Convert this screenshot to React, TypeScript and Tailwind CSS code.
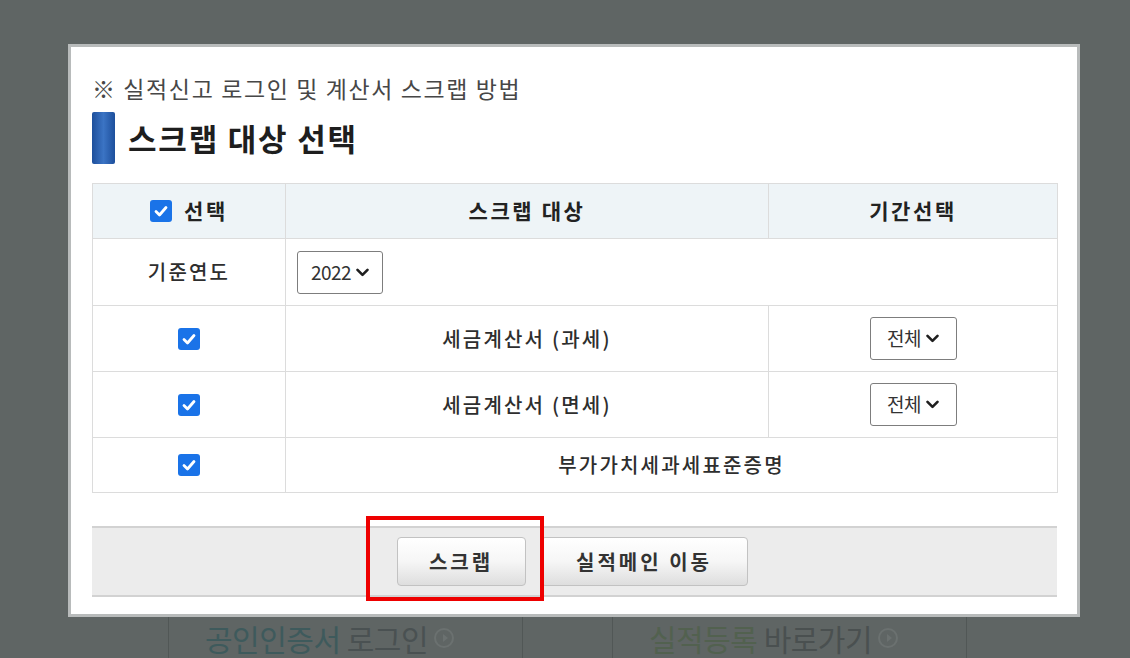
import React from "react";

const font = { fontFamily: '"Noto Sans CJK KR", "Noto Sans", sans-serif' };

// 파란 체크박스
function Check() {
  return (
    <span className="inline-flex h-[22px] w-[22px] items-center justify-center rounded-[3px] bg-[#1a73e8]">
      <svg width="16" height="16" viewBox="0 0 16 16" fill="none">
        <path d="M3 8.5 L6.5 12 L13 4.5" stroke="#fff" strokeWidth="2.8" strokeLinecap="round" strokeLinejoin="round" />
      </svg>
    </span>
  );
}

function Chevron() {
  return (
    <svg width="13" height="9" viewBox="0 0 13 9" fill="none">
      <path d="M1.5 1.8 L6.5 6.8 L11.5 1.8" stroke="#1f1f1f" strokeWidth="2.6" strokeLinecap="round" strokeLinejoin="round" />
    </svg>
  );
}

function Select({ label, w }: { label: string; w: string }) {
  return (
    <div className={`inline-flex h-[43px] ${w} items-center justify-center gap-[5px] rounded-[3px] border border-[#7d7d7d] bg-white text-[19px] font-normal tracking-[0px] text-[#333]`}>
      <span className="tracking-[-0.5px]">{label}</span>
      <Chevron />
    </div>
  );
}

function Arrow() {
  return (
    <span className="ml-[6px] inline-flex h-[20px] w-[20px] items-center justify-center rounded-full border-2 border-[#6b7170]">
      <span className="ml-[2px] h-0 w-0 border-y-[4px] border-l-[5px] border-y-transparent border-l-[#6b7170]" />
    </span>
  );
}

export default function App() {
  const cell = "border border-[#dcdcdc]";
  return (
    <div className="relative h-[658px] w-full overflow-hidden bg-[#5f6564]" style={font}>
      <div className="pl-[68px] pt-[44px]">
        {/* 모달 */}
        <div className="flex h-[573px] w-[1012px] flex-col border-[3px] border-[#b8bbbb] bg-white pl-[21px] pr-[20px] pt-[26px]">
          <div className="h-[30px] text-[23px] leading-[30px] tracking-[1.6px] text-[#474747]">
            ※ 실적신고 로그인 및 계산서 스크랩 방법
          </div>
          <div className="mt-[9px] flex h-[52px] items-center">
            <div className="h-[52px] w-[23px] rounded-[2px] bg-gradient-to-r from-[#1d4f9c] via-[#3b74c4] to-[#1d4f9c]" />
            <div className="ml-[13px] text-[31px] font-bold tracking-[1.8px] text-[#1e1e1e]">스크랩 대상 선택</div>
          </div>

          <table className="mt-[19px] w-[965px] table-fixed border-collapse text-[20px] font-medium tracking-[2.2px] text-[#2e2e2e]">
            <colgroup>
              <col className="w-[193px]" />
              <col className="w-[483px]" />
              <col className="w-[289px]" />
            </colgroup>
            <thead>
              <tr className="h-[55px] bg-[#eef4f7] text-[21px] font-bold tracking-[2.6px] text-[#222]">
                <th className={cell}>
                  <div className="flex items-center justify-center gap-[12px]">
                    <Check />
                    <span>선택</span>
                  </div>
                </th>
                <th className={cell}>스크랩 대상</th>
                <th className={cell}>기간선택</th>
              </tr>
            </thead>
            <tbody>
              <tr className="h-[67px]">
                <td className={`${cell} text-center`}>기준연도</td>
                <td className={`${cell} pl-[11px]`} colSpan={2}>
                  <Select label="2022" w="w-[86px]" />
                </td>
              </tr>
              {["세금계산서 (과세)", "세금계산서 (면세)"].map((t) => (
                <tr key={t} className="h-[66px]">
                  <td className={`${cell} text-center`}>
                    <div className="flex justify-center"><Check /></div>
                  </td>
                  <td className={`${cell} text-center`}>{t}</td>
                  <td className={`${cell} text-center`}>
                    <Select label="전체" w="w-[87px]" />
                  </td>
                </tr>
              ))}
              <tr className="h-[55px]">
                <td className={`${cell} text-center`}>
                  <div className="flex justify-center"><Check /></div>
                </td>
                <td className={`${cell} text-center`} colSpan={2}>부가가치세과세표준증명</td>
              </tr>
            </tbody>
          </table>

          {/* 버튼 영역 */}
          <div className="mt-[33px] flex h-[71px] items-center justify-center gap-[15px] border-y-2 border-y-[#d2d2d2] bg-[#ececec] pr-[5px]">
            <button className="h-[49px] w-[129px] rounded-[4px] border border-[#c2c2c2] bg-gradient-to-b from-[#ffffff] via-[#f6f6f6] to-[#dedede] text-[20px] font-bold tracking-[3px] text-[#333]">
              스크랩
            </button>
            <button className="h-[49px] w-[207px] rounded-[4px] border border-[#c2c2c2] bg-gradient-to-b from-[#ffffff] via-[#f6f6f6] to-[#dedede] text-[20px] font-bold tracking-[3px] text-[#333]">
              실적메인 이동
            </button>
          </div>
        </div>

        {/* 뒤쪽 페이지 버튼 */}
        <div className="flex h-[41px] pl-[100px]">
          <div className="flex w-[355px] items-center border-x border-[#515756] pl-[36px]">
            <span className="text-[30px] leading-[38px] tracking-[-0.5px]">
              <span className="text-[#3e5a5c]">공인인증서</span> <span className="text-[#4a5152]">로그인</span>
            </span>
            <Arrow />
          </div>
          <div className="w-[90px] border-r border-[#515756]" />
          <div className="flex w-[354px] items-center border-r border-[#515756] pl-[36px]">
            <span className="text-[30px] leading-[38px] tracking-[-0.5px]">
              <span className="text-[#52614f]">실적등록</span> <span className="text-[#4a5050]">바로가기</span>
            </span>
            <Arrow />
          </div>
        </div>
      </div>

      {/* 빨간 강조 박스 */}
      <div className="absolute left-[366px] top-[516px] h-[85px] w-[178px] border-[4px] border-[#ee0000]" />
    </div>
  );
}
